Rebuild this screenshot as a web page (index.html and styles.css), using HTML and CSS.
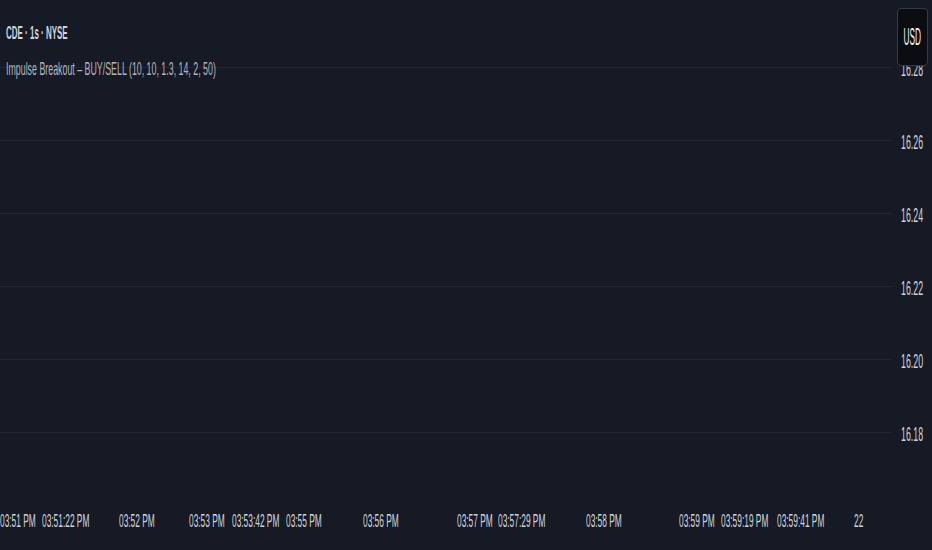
FILE: index.html
```html
<!DOCTYPE html>
<html lang="en">
<head>
    <meta charset="UTF-8">
    <meta name="viewport" content="width=device-width, initial-scale=1.0">
    <title>CDE · 1s · NYSE</title>
    <link rel="stylesheet" href="styles.css">
</head>
<body>
    <div class="chart">
        <div class="pane">
            <div class="legend">
                <div class="symbol"><span class="squeeze title-text">CDE · 1s · NYSE</span></div>
                <div class="study"><span class="squeeze study-text">Impulse Breakout – BUY/SELL (10, 10, 1.3, 14, 2, 50)</span></div>
            </div>
            <div class="hline"></div>
            <div class="hline"></div>
            <div class="hline"></div>
            <div class="hline"></div>
            <div class="hline"></div>
            <div class="hline"></div>
        </div>

        <div class="price-axis">
            <div class="currency"><span class="squeeze-c">USD</span></div>
            <div class="price"><span class="squeeze-r">16.28</span></div>
            <div class="price"><span class="squeeze-r">16.26</span></div>
            <div class="price"><span class="squeeze-r">16.24</span></div>
            <div class="price"><span class="squeeze-r">16.22</span></div>
            <div class="price"><span class="squeeze-r">16.20</span></div>
            <div class="price"><span class="squeeze-r">16.18</span></div>
        </div>

        <div class="time-axis">
            <div class="tick" style="left: 0px"><span class="squeeze">03:51 PM</span></div>
            <div class="tick" style="left: 42px"><span class="squeeze">03:51:22 PM</span></div>
            <div class="tick" style="left: 119px"><span class="squeeze">03:52 PM</span></div>
            <div class="tick" style="left: 189px"><span class="squeeze">03:53 PM</span></div>
            <div class="tick" style="left: 232px"><span class="squeeze">03:53:42 PM</span></div>
            <div class="tick" style="left: 286px"><span class="squeeze">03:55 PM</span></div>
            <div class="tick" style="left: 363px"><span class="squeeze">03:56 PM</span></div>
            <div class="tick" style="left: 457px"><span class="squeeze">03:57 PM</span></div>
            <div class="tick" style="left: 498px"><span class="squeeze">03:57:29 PM</span></div>
            <div class="tick" style="left: 586px"><span class="squeeze">03:58 PM</span></div>
            <div class="tick" style="left: 679px"><span class="squeeze">03:59 PM</span></div>
            <div class="tick" style="left: 721px"><span class="squeeze">03:59:19 PM</span></div>
            <div class="tick" style="left: 777px"><span class="squeeze">03:59:41 PM</span></div>
            <div class="tick" style="left: 854px"><span class="squeeze">22</span></div>
        </div>
        <div class="corner"></div>
    </div>
</body>
</html>
```

FILE: styles.css
```css
body {
    margin: 0;
    background: #161a25;
    font-family: "Liberation Sans", Arial, sans-serif;
    font-size: 19px;
    color: #d1d4dc;
    overflow: hidden;
}
.chart {
    display: grid;
    grid-template-columns: 892px 40px;
    grid-template-rows: 495px 55px;
    height: 550px;
}
.pane {
    position: relative;
    padding-top: 67px;
    box-sizing: border-box;
}
.hline {
    height: 73px;
    border-top: 1px solid #222633;
    box-sizing: border-box;
}

/* text in the screenshot is very narrow, so squeeze it */
.squeeze,
.squeeze-r,
.squeeze-c {
    display: inline-block;
    flex-shrink: 0;
    white-space: nowrap;
    transform: scaleX(0.44);
    transform-origin: left center;
}
.squeeze-r {
    transform-origin: right center;
}
.squeeze-c {
    transform: scaleX(0.36);
    transform-origin: center center;
}

.legend {
    position: absolute;
    top: 22px;
    left: 6px;
    display: flex;
    flex-direction: column;
    gap: 14px;
}
.symbol {
    line-height: 22px;
    font-weight: bold;
    color: #d1d4dc;
}
.title-text {
    transform: scaleX(0.42);
}
.study {
    line-height: 22px;
    color: #b2b5be;
}
.study-text {
    transform: scaleX(0.465);
}

.price-axis {
    position: relative;
    padding-top: 33px;
    box-sizing: border-box;
}
.price {
    height: 73px;
    display: flex;
    align-items: center;
    justify-content: flex-end;
    padding-right: 9px;
    font-size: 20px;
}
.currency {
    position: absolute;
    top: 8px;
    right: 4px;
    width: 31px;
    height: 58px;
    box-sizing: border-box;
    background: #0c0d11;
    border: 1px solid #363a45;
    border-radius: 4px;
    display: flex;
    align-items: center;
    justify-content: center;
    color: #f0f1f4;
    font-size: 23px;
    z-index: 1;
}

.time-axis {
    position: relative;
}
.tick {
    position: absolute;
    top: 15px;
    line-height: 22px;
    color: #d1d4dc;
}
```
